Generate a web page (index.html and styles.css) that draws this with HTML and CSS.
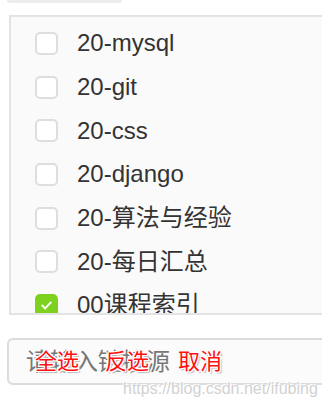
FILE: index.html
```html
<!DOCTYPE html>
<html lang="zh-CN">
<head>
<meta charset="utf-8">
<link rel="stylesheet" href="styles.css">
</head>
<body>
<div class="page">
  <div class="tab"></div>
  <div class="listbox">
    <ul class="list">
      <li class="item"><span class="cb"></span><span class="label">20-mysql</span></li>
      <li class="item"><span class="cb"></span><span class="label">20-git</span></li>
      <li class="item"><span class="cb"></span><span class="label">20-css</span></li>
      <li class="item"><span class="cb"></span><span class="label">20-django</span></li>
      <li class="item"><span class="cb"></span><span class="label">20-算法与经验</span></li>
      <li class="item"><span class="cb"></span><span class="label">20-每日汇总</span></li>
      <li class="item"><span class="cb checked"><svg viewBox="0 0 22 22" width="22" height="22"><polyline points="6,11.5 9.5,15 16,8" fill="none" stroke="#fff" stroke-width="2.2" stroke-linecap="round" stroke-linejoin="round"/></svg></span><span class="label">00课程索引</span></li>
    </ul>
  </div>
  <div class="inputwrap">
    <input class="field" type="text" placeholder="请输入链接源">
    <span class="note n1">全选</span>
    <span class="note n2">反选</span>
    <span class="note n3">取消</span>
    <span class="watermark">https://blog.csdn.net/ifubing</span>
  </div>
</div>
</body>
</html>
```
FILE: styles.css
```css
html, body {
  margin: 0;
  padding: 0;
  background: #fff;
  overflow: hidden;
}
.page {
  width: 322px;
  height: 403px;
  overflow: hidden;
  position: relative;
  font-family: "Liberation Sans", "Noto Sans CJK SC", sans-serif;
}
.tab {
  margin-left: 7px;
  width: 115px;
  height: 3px;
  background: #ececec;
  border-radius: 0 0 4px 4px;
}
.listbox {
  margin-top: 12px;
  margin-left: 9px;
  width: 330px;
  height: 296px;
  border: 2px solid #e3e3e3;
  border-right: none;
  background: #fafafa;
  overflow: hidden;
}
.list {
  list-style: none;
  margin: 0;
  padding: 4.5px 0 0 0;
}
.item {
  display: flex;
  align-items: center;
  height: 43.7px;
  padding-left: 24px;
}
.cb {
  box-sizing: border-box;
  width: 23px;
  height: 23px;
  border: 2px solid #dedede;
  border-radius: 5px;
  background: #fff;
  flex: none;
  display: flex;
  align-items: center;
  justify-content: center;
}
.cb.checked {
  background: #7fd11f;
  border-color: #7fd11f;
}
.cb svg {
  display: block;
}
.label {
  margin-left: 19px;
  font-size: 24px;
  color: #333;
  line-height: 1;
}
.inputwrap {
  position: relative;
  margin-top: 23px;
  margin-left: 7px;
  width: 340px;
  height: 47px;
}
.field {
  box-sizing: border-box;
  width: 100%;
  height: 47px;
  border: 2px solid #dcdcdc;
  border-radius: 6px;
  background: #fbfbfb;
  padding: 0 0 0 17px;
  font-family: "Liberation Sans", "Noto Sans CJK SC", sans-serif;
  font-size: 24px;
  color: #333;
  outline: none;
}
.field::placeholder {
  color: #777;
}
.note {
  position: absolute;
  top: 6px;
  font-family: "Noto Sans CJK SC", sans-serif;
  font-size: 22px;
  font-weight: 400;
  line-height: 30px;
  color: #ff1010;
  text-shadow: 1px 0 0 #fff, -1px 0 0 #fff, 0 1px 0 #fff, 0 -1px 0 #fff, 1px 1px 0 #fff, -1px -1px 0 #fff, 1px -1px 0 #fff, -1px 1px 0 #fff, 2px 2px 1px #bbb;
}
.n1 { left: 28px; }
.n2 { left: 98px; }
.n3 { left: 171px; }
.watermark {
  position: absolute;
  left: 116px;
  top: 42px;
  font-size: 16px;
  line-height: 18px;
  color: #d2d2d2;
  text-shadow: 1px 1px 0 #fff, -1px -1px 0 #fff;
  white-space: nowrap;
}
```
